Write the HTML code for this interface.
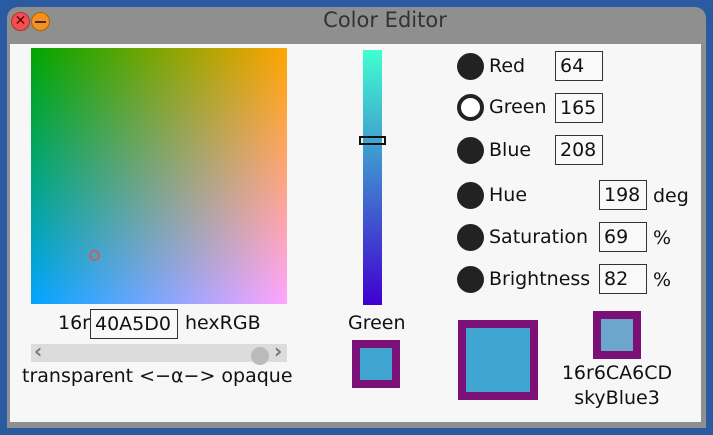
<!DOCTYPE html>
<html><head><style>
*{margin:0;padding:0;box-sizing:border-box}
body{width:713px;height:435px;background:#2a5aa0;position:relative;overflow:hidden;font-family:"DejaVu Sans","Liberation Sans",sans-serif;color:#111;font-size:19px}
.a{position:absolute}
.win{left:7px;top:7px;width:699px;height:421px;background:#8f8f8f;border-radius:11px 11px 0 0}
.content{left:10px;top:44px;width:691px;height:378px;background:#f7f7f7}
.box{position:absolute;border:1px solid #333;background:#f9f9f9;height:30px;line-height:28px;padding-left:4px}
.dot{position:absolute;width:27px;height:27px;border-radius:50%;background:#222;left:457px}
.lbl{position:absolute;left:489px;line-height:20px}
</style></head><body>
<div class="a win"></div>
<div class="a" style="left:11px;top:12px;width:19px;height:19px;border-radius:50%;background:#f05050;border:1px solid #a33;font-size:14px;line-height:16px;text-align:center;color:#600">✕</div>
<div class="a" style="left:31px;top:12px;width:19px;height:19px;border-radius:50%;background:#f7901e;border:1px solid #a60"><div class="a" style="left:3px;top:8px;width:11px;height:2px;background:#333"></div></div>
<div class="a" style="left:0;width:713px;top:8px;text-align:center;font-size:21px;color:#333;padding-left:57px">Color Editor</div>
<div class="a content"></div>
<div class="a" style="left:31px;top:48px;width:256px;height:256px;background:linear-gradient(to right,rgb(0,165,0),rgb(255,165,0))">
<div class="a" style="left:0;top:0;width:256px;height:256px;background:linear-gradient(to bottom,#000,#0000ff);mix-blend-mode:screen"></div>
<div class="a" style="left:58px;top:202px;width:11px;height:11px;border-radius:50%;border:2px solid #c86060"></div>
</div>
<div class="a" style="left:58px;top:312px">16r</div>
<div class="box" style="left:90px;top:309px;width:88px">40A5D0</div>
<div class="a" style="left:185px;top:312px">hexRGB</div>
<div class="a" style="left:31px;top:344px;width:256px;height:18px;background:#dcdcdc"></div>
<div class="a" style="left:34px;top:339px;font-size:20px;color:#777;font-weight:bold">‹</div>
<div class="a" style="left:274px;top:339px;font-size:20px;color:#777;font-weight:bold">›</div>
<div class="a" style="left:251px;top:347px;width:18px;height:18px;border-radius:50%;background:#bbb"></div>
<div class="a" style="left:22px;top:365px">transparent &lt;−α−&gt; opaque</div>
<div class="a" style="left:363px;top:50px;width:19px;height:255px;background:linear-gradient(to bottom,rgb(64,255,208),rgb(64,0,208))"></div>
<div class="a" style="left:359px;top:136px;width:27px;height:9px;border:2px solid #111"></div>
<div class="a" style="left:348px;top:312px">Green</div>
<div class="a" style="left:352px;top:340px;width:48px;height:48px;border:8px solid #7b1177;background:#40a5d0"></div>
<div class="a" style="left:458px;top:320px;width:80px;height:80px;border:8px solid #7b1177;background:#40a5d0"></div>
<div class="a" style="left:593px;top:311px;width:48px;height:48px;border:8px solid #7b1177;background:#6ca6cd"></div>
<div class="a" style="left:547px;top:362px;width:140px;text-align:center">16r6CA6CD</div>
<div class="a" style="left:547px;top:387px;width:140px;text-align:center">skyBlue3</div>
<div class="dot" style="top:53px"></div><div class="lbl" style="top:56px">Red</div><div class="box" style="left:555px;top:51px;width:48px">64</div>
<div class="dot" style="top:94px;background:#fff;border:4px solid #222"></div><div class="lbl" style="top:97px">Green</div><div class="box" style="left:555px;top:93px;width:48px">165</div>
<div class="dot" style="top:137px"></div><div class="lbl" style="top:140px">Blue</div><div class="box" style="left:555px;top:135px;width:48px">208</div>
<div class="dot" style="top:182px"></div><div class="lbl" style="top:185px">Hue</div><div class="box" style="left:599px;top:180px;width:48px">198</div><div class="a" style="left:653px;top:185px">deg</div>
<div class="dot" style="top:224px"></div><div class="lbl" style="top:227px">Saturation</div><div class="box" style="left:599px;top:222px;width:48px">69</div><div class="a" style="left:653px;top:227px">%</div>
<div class="dot" style="top:266px"></div><div class="lbl" style="top:269px">Brightness</div><div class="box" style="left:599px;top:264px;width:48px">82</div><div class="a" style="left:653px;top:269px">%</div>
</body></html>
